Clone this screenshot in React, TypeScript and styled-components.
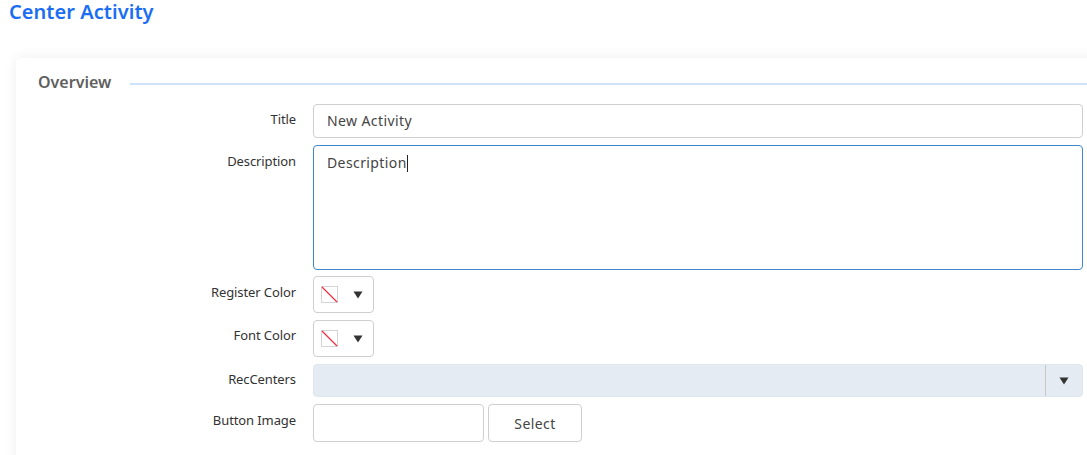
import styled, { createGlobalStyle } from 'styled-components'

const Global = createGlobalStyle`
  html, body {
    margin: 0;
    padding: 0;
    background: #fff;
    overflow: hidden;
  }
  body {
    font-family: "Noto Sans", "Open Sans", sans-serif;
    color: #333;
  }
`

const Page = styled.div`
  width: 1087px;
  height: 455px;
  overflow: hidden;
`
const Heading = styled.h1`
  margin: 0;
  padding: 0 0 0 9px;
  height: 58px;
  box-sizing: border-box;
  font-size: 20px;
  line-height: 24px;
  letter-spacing: 0.05px;
  font-weight: 600;
  color: #1b6ef3;
`
const Card = styled.section`
  margin-left: 16px;
  width: 1120px;
  height: 420px;
  box-sizing: border-box;
  padding: 13px 0 0 22px;
  background: #fff;
  border-radius: 4px;
  box-shadow: 0 0 14px rgba(0, 0, 0, 0.07);
`
const SectionHead = styled.div`
  display: flex;
  align-items: center;
  gap: 18px;
  height: 24px;
  margin-bottom: 9px;
  margin-right: 30px;
`
const SectionTitle = styled.h2`
  margin: 0 0 2px;
  font-size: 16px;
  line-height: 22px;
  font-weight: 600;
  color: #5f5f5f;
  width: 74px;
`
const Rule = styled.div`
  flex: 1;
  height: 2px;
  margin-top: 2px;
  background: #cfe2fb;
`
const Row = styled.div<{ $gap: number; $height: number }>`
  display: grid;
  grid-template-columns: 258px 770px;
  column-gap: 17px;
  height: ${p => p.$height}px;
  margin-bottom: ${p => p.$gap}px;
`
const Label = styled.label<{ $top: number }>`
  text-align: right;
  font-size: 13px;
  line-height: 16px;
  letter-spacing: -0.1px;
  padding-top: ${p => p.$top}px;
  color: #333;
`
const TextField = styled.div<{ $focus?: boolean }>`
  box-sizing: border-box;
  height: 100%;
  padding: ${p => (p.$focus ? '8px' : '7px')} 13px;
  font-size: 14px;
  line-height: 18px;
  letter-spacing: 0.4px;
  color: #444;
  background: #fff;
  border-radius: 4px;
  border: 1px solid ${p => (p.$focus ? '#3f87c8' : '#cfcfcf')};
`
const Caret = styled.span`
  display: inline-block;
  width: 1px;
  height: 17px;
  vertical-align: -4px;
  background: #222;
`
const ColorPicker = styled.div`
  box-sizing: border-box;
  width: 61px;
  height: 100%;
  display: flex;
  align-items: center;
  padding-left: 7px;
  gap: 15px;
  border: 1px solid #cfcfcf;
  border-radius: 4px;
  background: #fff;
`
const Swatch = styled.svg`
  display: block;
  width: 17px;
  height: 17px;
`
const Arrow = styled.svg`
  display: block;
  width: 10px;
  height: 8px;
`
const Select = styled.div`
  box-sizing: border-box;
  height: 100%;
  display: flex;
  justify-content: flex-end;
  background: #e5ebf3;
  border: 1px solid #e0e6ee;
  border-radius: 4px;
`
const SelectToggle = styled.div`
  width: 36px;
  display: flex;
  align-items: center;
  justify-content: center;
  border-left: 1px solid #c8c8c8;
`
const FileRow = styled.div`
  display: flex;
  gap: 4px;
  height: 100%;
`
const FileInput = styled.div`
  box-sizing: border-box;
  width: 171px;
  border: 1px solid #cfcfcf;
  border-radius: 4px;
  background: #fff;
`
const SelectButton = styled.button`
  box-sizing: border-box;
  width: 94px;
  padding: 0;
  border: 1px solid #cfcfcf;
  border-radius: 4px;
  background: #fff;
  font-family: inherit;
  font-size: 14px;
  letter-spacing: 0.4px;
  color: #444;
`

const NoColor = () => (
  <Swatch viewBox="0 0 17 17">
    <rect x="0.5" y="0.5" width="16" height="16" fill="#fff" stroke="#d4d4d4" />
    <line x1="1" y1="1" x2="16" y2="16" stroke="#ee2f45" strokeWidth="1.2" />
  </Swatch>
)

const DownArrow = () => (
  <Arrow viewBox="0 0 10 8">
    <path d="M0.5 0.5H9.5L5 7.5Z" fill="#333" />
  </Arrow>
)

const App = () => {
  return (
    <Page>
      <Global />
      <Heading>Center Activity</Heading>
      <Card>
        <SectionHead>
          <SectionTitle>Overview</SectionTitle>
          <Rule />
        </SectionHead>
        <Row $height={33} $gap={8}>
          <Label $top={7}>Title</Label>
          <TextField>New Activity</TextField>
        </Row>
        <Row $height={125} $gap={6}>
          <Label $top={8}>Description</Label>
          <TextField $focus>
            Description
            <Caret />
          </TextField>
        </Row>
        <Row $height={37} $gap={7}>
          <Label $top={8}>Register Color</Label>
          <ColorPicker>
            <NoColor />
            <DownArrow />
          </ColorPicker>
        </Row>
        <Row $height={37} $gap={7}>
          <Label $top={7}>Font Color</Label>
          <ColorPicker>
            <NoColor />
            <DownArrow />
          </ColorPicker>
        </Row>
        <Row $height={33} $gap={7}>
          <Label $top={7}>RecCenters</Label>
          <Select>
            <SelectToggle>
              <DownArrow />
            </SelectToggle>
          </Select>
        </Row>
        <Row $height={38} $gap={0}>
          <Label $top={8}>Button Image</Label>
          <FileRow>
            <FileInput />
            <SelectButton>Select</SelectButton>
          </FileRow>
        </Row>
      </Card>
    </Page>
  )
}

export default App
